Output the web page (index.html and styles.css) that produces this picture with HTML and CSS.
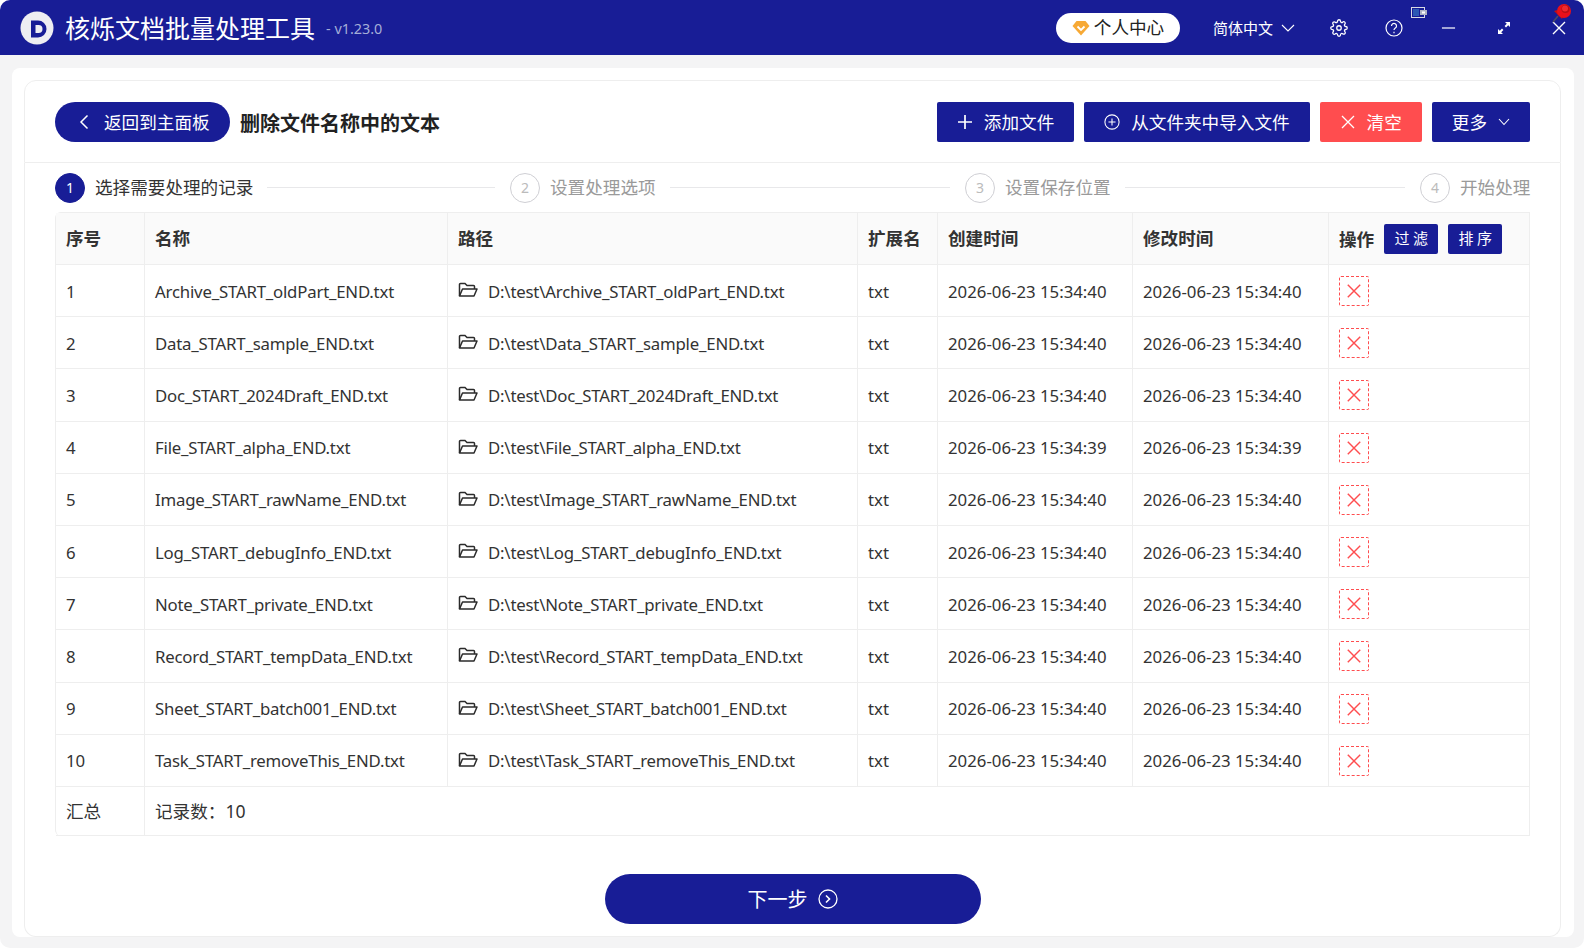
FILE: index.html
```html
<!DOCTYPE html>
<html lang="zh-CN">
<head>
<meta charset="utf-8">
<title>核烁文档批量处理工具</title>
<link rel="stylesheet" href="styles.css">
</head>
<body>
<div class="app">
  <header class="titlebar">
    <svg class="logo" viewBox="0 0 34 34"><circle cx="17" cy="17" r="16.5" fill="#eeeef2"/><path d="M11 9.500h7a8.500 8.500 0 0 1 0 17h-7z" fill="#181d96"/><path d="M15.500 14h3a4 4 0 0 1 0 8h-3z" fill="#eeeef2"/></svg>
    <span class="app-name">核烁文档批量处理工具</span>
    <span class="version">- v1.23.0</span>
    <div class="title-right">
      <button class="pill"><svg class="gem" viewBox="0 0 18 16"><path d="M4.500 1h9L17.500 6 9 15.500.5 6z" fill="#f7a935"/><path d="M5.500 6.500 9 10l3.500-3.500" fill="none" stroke="#fff" stroke-width="1.800"/></svg>个人中心</button>
      <span class="lang">简体中文<svg class="lang-arrow" viewBox="0 0 14 8"><path d="M1 1l6 6 6-6" fill="none" stroke="#fff" stroke-width="1.100"/></svg></span>
      <svg class="ctl ctl-gear" viewBox="0 0 24 24" fill="none" stroke="#fff" stroke-width="1.700"><circle cx="12" cy="12" r="3"/><path d="M19.4 15a1.650 1.650 0 0 0 .33 1.820l.06.06a2 2 0 0 1 0 2.830 2 2 0 0 1-2.830 0l-.06-.06a1.650 1.650 0 0 0-1.820-.33 1.650 1.650 0 0 0-1 1.510V21a2 2 0 0 1-2 2 2 2 0 0 1-2-2v-.09A1.650 1.650 0 0 0 9 19.400a1.650 1.650 0 0 0-1.820.33l-.06.06a2 2 0 0 1-2.830 0 2 2 0 0 1 0-2.830l.06-.06a1.650 1.650 0 0 0 .33-1.820 1.650 1.650 0 0 0-1.510-1H3a2 2 0 0 1-2-2 2 2 0 0 1 2-2h.09A1.650 1.650 0 0 0 4.600 9a1.650 1.650 0 0 0-.33-1.820l-.06-.06a2 2 0 0 1 0-2.830 2 2 0 0 1 2.830 0l.06.06a1.650 1.650 0 0 0 1.820.33H9a1.650 1.650 0 0 0 1-1.510V3a2 2 0 0 1 2-2 2 2 0 0 1 2 2v.09a1.650 1.650 0 0 0 1 1.510 1.650 1.650 0 0 0 1.820-.33l.06-.06a2 2 0 0 1 2.830 0 2 2 0 0 1 0 2.830l-.06.06a1.650 1.650 0 0 0-.33 1.820V9a1.650 1.650 0 0 0 1.510 1H21a2 2 0 0 1 2 2 2 2 0 0 1-2 2h-.09a1.650 1.650 0 0 0-1.510 1z"/></svg>
      <svg class="ctl ctl-help" viewBox="0 0 18 18" fill="none" stroke="#fff" stroke-width="1.200"><circle cx="9" cy="9" r="8"/><path d="M6.500 7a2.500 2.500 0 1 1 3.800 2.100c-.9.6-1.300 1-1.300 2"/><path d="M9 12.800v1.400"/></svg>
      <svg class="ctl ctl-min" viewBox="0 0 16 2"><path d="M1 1h14" stroke="#fff" stroke-width="1.300"/></svg>
      <svg class="ctl ctl-max" viewBox="0 0 14 14" fill="#fff"><path d="M8 1h5v5l-1.800-1.800-2.200 2.200-1.400-1.400 2.200-2.200z"/><path d="M6 13H1V8l1.800 1.800L5 7.600 6.400 9l-2.200 2.200z"/></svg>
      <svg class="ctl ctl-close" viewBox="0 0 14 14"><path d="M1 1l12 12M13 1L1 13" stroke="#fff" stroke-width="1.400"/></svg>
    </div>
    <svg class="mini-wallet" viewBox="0 0 16 11"><rect x=".5" y=".5" width="13" height="10" fill="#181d96" stroke="#d8dae4"/><rect x="2" y="2" width="6" height="7" fill="#2c59b4"/><rect x="9" y="3" width="7" height="5" fill="#aeb3c4"/><rect x="11" y="4.500" width="3" height="2" fill="#fff"/></svg>
    <svg class="pin" viewBox="0 0 20 20"><path d="M1 19l5-6" stroke="#4a4a66" stroke-width="1.600"/><path d="M2 8l3-1 6 6-1 3z" fill="#c40d16"/><circle cx="12" cy="8" r="7" fill="#e8101a"/><circle cx="13.500" cy="6" r="4" fill="#b50e16"/><circle cx="13" cy="5.500" r="3" fill="#f02a2e"/></svg>
  </header>

  <main class="page">
    <section class="card">
      <div class="toolbar">
        <button class="btn-back"><svg class="i-back" viewBox="0 0 10 16"><path d="M8.500 1.500 2 8l6.500 6.500" fill="none" stroke="#fff" stroke-width="1.500"/></svg><span>返回到主面板</span></button>
        <h1 class="page-title">删除文件名称中的文本</h1>
        <div class="actions">
          <button class="btn"><svg class="i-btn" viewBox="0 0 16 16"><path d="M8 1v14M1 8h14" stroke="#fff" stroke-width="1.700"/></svg>添加文件</button>
          <button class="btn"><svg class="i-btn" viewBox="0 0 18 18" fill="none" stroke="#fff" stroke-width="1.200"><circle cx="9" cy="9" r="8"/><path d="M9 5v8M5 9h8"/></svg>从文件夹中导入文件</button>
          <button class="btn btn-red"><svg class="i-btn" viewBox="0 0 16 16"><path d="M2 2l12 12M14 2 2 14" stroke="#fff" stroke-width="1.300"/></svg>清空</button>
          <button class="btn btn-more">更多<svg class="i-more" viewBox="0 0 12 8"><path d="M1 1l5 5.500L11 1" fill="none" stroke="#fff" stroke-width="1.100"/></svg></button>
        </div>
      </div>

      <ol class="steps">
        <li class="step step-on"><span class="num">1</span><span class="step-text">选择需要处理的记录</span><span class="line"></span></li>
        <li class="step"><span class="num">2</span><span class="step-text">设置处理选项</span><span class="line"></span></li>
        <li class="step"><span class="num">3</span><span class="step-text">设置保存位置</span><span class="line"></span></li>
        <li class="step step-last"><span class="num">4</span><span class="step-text">开始处理</span></li>
      </ol>

      <div class="table-wrap">
      <table class="grid">
        <colgroup>
          <col class="c1"><col class="c2"><col class="c3"><col class="c4"><col class="c5"><col class="c6"><col class="c7">
        </colgroup>
        <thead>
          <tr>
            <th>序号</th><th>名称</th><th>路径</th><th>扩展名</th><th>创建时间</th><th>修改时间</th>
            <th><div class="op-head">操作<button class="mini">过 滤</button><button class="mini">排 序</button></div></th>
          </tr>
        </thead>
        <tbody>
          <tr><td>1</td><td class="fname">Archive_START_oldPart_END.txt</td><td class="fname"><div class="path"><svg class="folder" viewBox="0 0 20 16"><use href="#fold"/></svg>D:\test\Archive_START_oldPart_END.txt</div></td><td>txt</td><td>2026-06-23 15:34:40</td><td>2026-06-23 15:34:40</td><td><span class="del"><svg viewBox="0 0 18 18"><use href="#ex"/></svg></span></td></tr>
          <tr><td>2</td><td class="fname">Data_START_sample_END.txt</td><td class="fname"><div class="path"><svg class="folder" viewBox="0 0 20 16"><use href="#fold"/></svg>D:\test\Data_START_sample_END.txt</div></td><td>txt</td><td>2026-06-23 15:34:40</td><td>2026-06-23 15:34:40</td><td><span class="del"><svg viewBox="0 0 18 18"><use href="#ex"/></svg></span></td></tr>
          <tr><td>3</td><td class="fname">Doc_START_2024Draft_END.txt</td><td class="fname"><div class="path"><svg class="folder" viewBox="0 0 20 16"><use href="#fold"/></svg>D:\test\Doc_START_2024Draft_END.txt</div></td><td>txt</td><td>2026-06-23 15:34:40</td><td>2026-06-23 15:34:40</td><td><span class="del"><svg viewBox="0 0 18 18"><use href="#ex"/></svg></span></td></tr>
          <tr><td>4</td><td class="fname">File_START_alpha_END.txt</td><td class="fname"><div class="path"><svg class="folder" viewBox="0 0 20 16"><use href="#fold"/></svg>D:\test\File_START_alpha_END.txt</div></td><td>txt</td><td>2026-06-23 15:34:39</td><td>2026-06-23 15:34:39</td><td><span class="del"><svg viewBox="0 0 18 18"><use href="#ex"/></svg></span></td></tr>
          <tr><td>5</td><td class="fname">Image_START_rawName_END.txt</td><td class="fname"><div class="path"><svg class="folder" viewBox="0 0 20 16"><use href="#fold"/></svg>D:\test\Image_START_rawName_END.txt</div></td><td>txt</td><td>2026-06-23 15:34:40</td><td>2026-06-23 15:34:40</td><td><span class="del"><svg viewBox="0 0 18 18"><use href="#ex"/></svg></span></td></tr>
          <tr><td>6</td><td class="fname">Log_START_debugInfo_END.txt</td><td class="fname"><div class="path"><svg class="folder" viewBox="0 0 20 16"><use href="#fold"/></svg>D:\test\Log_START_debugInfo_END.txt</div></td><td>txt</td><td>2026-06-23 15:34:40</td><td>2026-06-23 15:34:40</td><td><span class="del"><svg viewBox="0 0 18 18"><use href="#ex"/></svg></span></td></tr>
          <tr><td>7</td><td class="fname">Note_START_private_END.txt</td><td class="fname"><div class="path"><svg class="folder" viewBox="0 0 20 16"><use href="#fold"/></svg>D:\test\Note_START_private_END.txt</div></td><td>txt</td><td>2026-06-23 15:34:40</td><td>2026-06-23 15:34:40</td><td><span class="del"><svg viewBox="0 0 18 18"><use href="#ex"/></svg></span></td></tr>
          <tr><td>8</td><td class="fname">Record_START_tempData_END.txt</td><td class="fname"><div class="path"><svg class="folder" viewBox="0 0 20 16"><use href="#fold"/></svg>D:\test\Record_START_tempData_END.txt</div></td><td>txt</td><td>2026-06-23 15:34:40</td><td>2026-06-23 15:34:40</td><td><span class="del"><svg viewBox="0 0 18 18"><use href="#ex"/></svg></span></td></tr>
          <tr><td>9</td><td class="fname">Sheet_START_batch001_END.txt</td><td class="fname"><div class="path"><svg class="folder" viewBox="0 0 20 16"><use href="#fold"/></svg>D:\test\Sheet_START_batch001_END.txt</div></td><td>txt</td><td>2026-06-23 15:34:40</td><td>2026-06-23 15:34:40</td><td><span class="del"><svg viewBox="0 0 18 18"><use href="#ex"/></svg></span></td></tr>
          <tr><td>10</td><td class="fname">Task_START_removeThis_END.txt</td><td class="fname"><div class="path"><svg class="folder" viewBox="0 0 20 16"><use href="#fold"/></svg>D:\test\Task_START_removeThis_END.txt</div></td><td>txt</td><td>2026-06-23 15:34:40</td><td>2026-06-23 15:34:40</td><td><span class="del"><svg viewBox="0 0 18 18"><use href="#ex"/></svg></span></td></tr>
        </tbody>
        <tfoot>
          <tr><td>汇总</td><td colspan="6">记录数：10</td></tr>
        </tfoot>
      </table>
      </div>

      <div class="next-row">
        <button class="btn-next">下一步<svg class="i-next" viewBox="0 0 20 20" fill="none" stroke="#fff"><circle cx="10" cy="10" r="9" stroke-width="1.300"/><path d="M8 6.500 11.500 10 8 13.500" stroke-width="1.600"/></svg></button>
      </div>
    </section>
  </main>
</div>
<svg class="defs" width="0" height="0">
  <defs>
    <g id="fold" fill="none" stroke="#2b2b2b" stroke-width="1.500"><path d="M1.500 14V2.500a1 1 0 0 1 1-1h4.500l2 2h6.500a1 1 0 0 1 1 1V7"/><path d="M1.500 14 4.500 7H19l-3 7z" stroke-linejoin="round"/></g>
    <path id="ex" d="M2 2l14 14M16 2 2 16" stroke="#ff4d4f" stroke-width="1.600"/>
  </defs>
</svg>
</body>
</html>
```
FILE: styles.css
```css
* { box-sizing: border-box; }
html, body { margin: 0; height: 100%; background: #fff; overflow: hidden; }
body { font-family: "Noto Sans", "Noto Sans CJK SC", sans-serif; font-size: 17.6px; color: #333; }
button { font-family: inherit; border: 0; cursor: pointer; padding: 0; }
.defs { position: absolute; }

.app { height: 948px; display: flex; flex-direction: column; background: #f4f4f5; border-radius: 10px; overflow: hidden; }

.titlebar { position: relative; flex: 0 0 55px; background: #181d96; color: #fff; display: flex; align-items: center; padding-left: 20px; }
.logo { width: 34px; height: 34px; margin-right: 11px; }
.app-name { font-family: "Noto Sans CJK SC", sans-serif; font-size: 25px; padding-bottom: 2px; }
.version { font-size: 14.4px; color: #a5aed8; margin-left: 11px; margin-top: 2px; }
.title-right { margin-left: auto; display: flex; align-items: center; }
.pill { width: 124px; height: 30px; margin-right: 33px; padding-bottom: 2px; border-radius: 15px; background: #fff; color: #222; font-size: 17.6px; display: flex; align-items: center; justify-content: center; gap: 4px; font-family: "Noto Sans CJK SC", sans-serif; }
.gem { width: 18px; height: 16px; margin-top: 2px; }
.lang { font-family: "Noto Sans CJK SC", sans-serif; font-size: 15px; display: flex; align-items: center; gap: 8px; margin-right: 35px; }
.lang-arrow { width: 14px; height: 8px; }
.ctl { display: block; flex: none; }
.ctl-gear { width: 18px; height: 18px; margin-right: 37px; }
.ctl-help { width: 18px; height: 18px; margin-right: 38px; }
.ctl-min { width: 15px; height: 2px; margin-right: 41px; }
.ctl-max { width: 14px; height: 14px; margin-right: 41px; }
.ctl-close { width: 14px; height: 14px; margin-right: 18px; }
.mini-wallet { position: absolute; left: 1411px; top: 7px; width: 16px; height: 11px; }
.pin { position: absolute; left: 1552px; top: 3px; width: 20px; height: 20px; }

.page { flex: 1; min-height: 0; padding: 13px 10px 11px 12px; }
.card { height: 100%; background: #fff; border-radius: 8px; padding: 12px 13px 0 12px; display: flex; flex-direction: column; }

.toolbar { height: 83px; padding: 21px 30px 0 30px; display: flex; align-items: flex-start; border: 1px solid #eee; border-radius: 12px 12px 0 0; }
.btn-back { width: 175px; height: 40px; border-radius: 20px; background: #181d96; color: #fff; font-size: 17.6px; display: flex; align-items: center; gap: 15px; padding: 0 0 2px 24px; font-family: "Noto Sans CJK SC", sans-serif; }
.i-back { width: 10px; height: 16px; margin-top: 2px; }
.page-title { margin: 1px 0 0 10px; font-size: 20px; line-height: 40px; font-weight: 700; color: #222; font-family: "Noto Sans CJK SC", sans-serif; }
.actions { margin-left: auto; display: flex; gap: 10px; }
.btn { height: 40px; padding: 0 20px 2px; background: #181d96; color: #fff; border-radius: 2px; font-size: 17.6px; display: flex; align-items: center; gap: 11px; font-family: "Noto Sans CJK SC", sans-serif; }
.i-btn { width: 16px; height: 16px; margin-top: 2px; }
.btn-red { background: #ff4d4f; }
.i-more { width: 12px; height: 8px; margin-top: 2px; }

.steps { list-style: none; margin: 0; padding: 0 30px; height: 49px; display: flex; align-items: center; border-left: 1px solid #eee; border-right: 1px solid #eee; }
.step { flex: 0 0 455px; display: flex; align-items: center; color: #9a9a9a; }
.step-last { flex: 1; }
.num { flex: none; width: 30px; height: 30px; border: 1px solid #cfcfd4; border-radius: 50%; display: flex; align-items: center; justify-content: center; font-size: 14px; color: #bbb; }
.step-text { margin-left: 10px; padding-bottom: 2px; font-family: "Noto Sans CJK SC", sans-serif; white-space: nowrap; }
.line { flex: 1; height: 1px; margin: 0 15px 0 14px; background: #e8e8ea; }
.step-on { color: #333; }
.step-on .num { background: #181d96; border-color: #181d96; color: #fff; }

.table-wrap { padding: 0 30px; border-left: 1px solid #eee; border-right: 1px solid #eee; }
.grid { width: 1474px; table-layout: fixed; border-collapse: separate; border-spacing: 0; border-top: 1px solid #eee; border-left: 1px solid #eee; border-radius: 6px 0 0 6px; font-size: 16.8px; color: #333; }
.c1 { width: 89px; } .c2 { width: 303px; } .c3 { width: 410px; } .c4 { width: 80px; } .c5 { width: 195px; } .c6 { width: 196px; } .c7 { width: 201px; }
.grid th, .grid td { padding: 0 0 0 10px; border-right: 1px solid #eee; border-bottom: 1px solid #eee; text-align: left; white-space: nowrap; overflow: hidden; }
.grid th { height: 52px; padding-bottom: 2px; background: #fafafa; font-weight: 700; font-size: 17.6px; color: #333; font-family: "Noto Sans CJK SC", sans-serif; }
.grid tbody td { height: 52.2px; padding-top: 1px; }
.grid tbody .fname { letter-spacing: -0.2px; }
.grid tfoot td { height: 49px; font-size: 17.6px; }
.op-head { display: flex; align-items: center; padding-top: 2px; }
.mini { width: 54px; height: 30px; margin-left: 10px; padding-bottom: 2px; background: #181d96; color: #fff; border-radius: 2px; font-size: 15px; font-weight: 400; font-family: "Noto Sans CJK SC", sans-serif; }
.path { display: flex; align-items: center; gap: 10px; }
.folder { width: 20px; height: 16px; margin-top: -2px; }
.del { display: flex; width: 30px; height: 30px; border: 1px dashed #ff4d4f; border-radius: 2px; align-items: center; justify-content: center; }
.del svg { width: 16px; height: 16px; }

.next-row { display: flex; justify-content: center; flex: 1; padding-top: 38px; border: 1px solid #eee; border-top: 0; border-radius: 0 0 12px 12px; }
.btn-next { width: 376px; height: 50px; border-radius: 25px; background: #181d96; color: #fff; font-size: 20px; display: flex; align-items: center; justify-content: center; gap: 10px; font-family: "Noto Sans CJK SC", sans-serif; }
.i-next { width: 20px; height: 20px; }
```
